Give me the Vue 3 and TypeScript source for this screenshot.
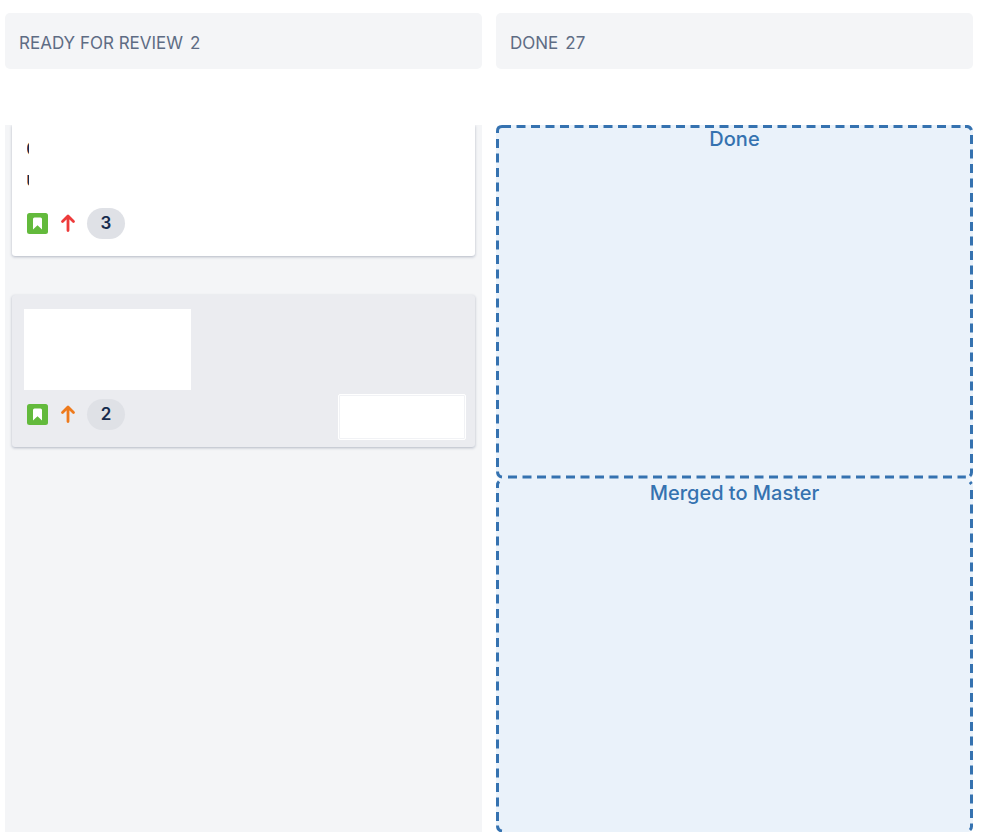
<script setup lang="ts">
interface Zone {
  label: string
  closed: boolean
}

const headers = [
  { name: 'Ready for review', count: 2 },
  { name: 'Done', count: 27 },
]

const zones: Zone[] = [
  { label: 'Done', closed: true },
  { label: 'Merged to Master', closed: false },
]
</script>

<template>
  <main class="board">
    <header class="headers">
      <h2 v-for="h in headers" :key="h.name" class="column-header">
        <span>{{ h.name }}</span>
        <span>{{ h.count }}</span>
      </h2>
    </header>

    <div class="columns">
      <section class="column" aria-label="Ready for review">
        <article class="card first">
          <div class="summary">
            <span class="line">C</span>
            <span class="line">u</span>
          </div>
          <div class="meta">
            <svg class="story" viewBox="0 0 21 21" aria-hidden="true">
              <rect width="21" height="21" rx="2.5" fill="#63ba3c" />
              <path d="M6 6a1.500 1.500 0 0 1 1.500-1.500h6A1.500 1.500 0 0 1 15 6v10.500l-4.500-4.200L6 16.500z" fill="#fff" />
            </svg>
            <svg class="priority high" viewBox="0 0 14 18" aria-hidden="true">
              <path d="M7 15.600V1.400M1.500 6.600 7 1.100l5.500 5.500" />
            </svg>
            <span class="estimate">3</span>
          </div>
        </article>

        <article class="card second">
          <div class="blank-summary"></div>
          <div class="footer">
            <div class="meta">
              <svg class="story" viewBox="0 0 21 21" aria-hidden="true">
                <rect width="21" height="21" rx="2.5" fill="#63ba3c" />
                <path d="M6 6a1.500 1.500 0 0 1 1.500-1.500h6A1.500 1.500 0 0 1 15 6v10.500l-4.500-4.200L6 16.500z" fill="#fff" />
              </svg>
              <svg class="priority medium" viewBox="0 0 14 18" aria-hidden="true">
                <path d="M7 15.600V1.400M1.500 6.600 7 1.100l5.500 5.500" />
              </svg>
              <span class="estimate">2</span>
            </div>
            <div class="blank-key"></div>
          </div>
        </article>
      </section>

      <section class="drop-column" aria-label="Done">
        <div v-for="z in zones" :key="z.label" class="zone">
          <svg class="outline" aria-hidden="true">
            <template v-if="z.closed">
              <line class="dash" x1="6" y1="1.5" x2="99%" y2="1.5" />
              <path class="corner" d="M1.500 8V6Q1.500 1.500 6 1.500" />
              <svg x="100%" overflow="visible">
                <path class="corner" d="M-8 1.500H-6Q-3 1.500-1.500 5" />
              </svg>
            </template>
            <path v-else class="corner" d="M1.500 9V6Q1.500 4 3 2.500" />
            <line class="dash" x1="1.5" y1="14" x2="1.5" y2="98%" />
            <svg x="100%" overflow="visible">
              <line class="dash" x1="-1.5" :y1="z.closed ? 10 : 11" x2="-1.5" y2="98%" />
              <path v-if="!z.closed" class="corner" d="M-3 3-1.500 5" />
            </svg>
            <svg y="100%" overflow="visible">
              <line v-if="z.closed" class="dash" x1="12" y1="-1.5" x2="98.5%" y2="-1.5" />
              <path class="corner" d="M1.500-7Q1.500-2 6-1.500" />
              <svg x="100%" overflow="visible">
                <path class="corner" d="M-1.500-8V-6Q-1.500-4-3-2.500" />
              </svg>
            </svg>
          </svg>
          <h3 class="zone-label">{{ z.label }}</h3>
        </div>
      </section>
    </div>
  </main>
</template>

<style>
body {
  margin: 0;
  background: #fff;
}
</style>

<style scoped>
.board {
  box-sizing: border-box;
  display: flex;
  flex-direction: column;
  min-height: calc(100vh - 3px);
  padding: 13px 26px 0 5px;
  font-family: Inter, "Liberation Sans", sans-serif;
  color: #172b4d;
}

.headers,
.columns {
  display: grid;
  grid-template-columns: 1fr 1fr;
  gap: 14px;
}

.headers {
  margin-bottom: 56px;
}

.columns {
  flex: 1;
}

.column-header {
  box-sizing: border-box;
  display: flex;
  align-items: center;
  gap: 7px;
  height: 56px;
  margin: 0;
  padding: 4px 14px 0;
  border-radius: 5px;
  background: #f4f5f7;
  color: #5e6c84;
  font-size: 17px;
  font-weight: 400;
  line-height: 24px;
  text-transform: uppercase;
}

.column {
  box-sizing: border-box;
  padding: 0 7px;
  background: #f4f5f7;
}

.card {
  border-radius: 3px;
  box-shadow: 0 1px 3px rgba(9, 30, 66, 0.28);
}

.first {
  margin-bottom: 39px;
  padding: 9px 15px 17px;
  border-radius: 0 0 3px 3px;
  background: #fff;
  clip-path: inset(0 -4px -4px -4px);
}

.second {
  padding: 14px 9px 7px 12px;
  background: #ebecf0;
}

.summary {
  width: 2px;
  margin-bottom: 14px;
  overflow: hidden;
}

.line {
  display: block;
  font-size: 20px;
  font-weight: 500;
  line-height: 30px;
  text-indent: -1px;
}

.meta {
  display: flex;
  align-items: center;
}

.story {
  width: 21px;
  height: 21px;
  margin-right: 13px;
}

.priority {
  width: 14px;
  height: 18px;
  margin-right: 12px;
  overflow: visible;
  fill: none;
  stroke-width: 2.8;
  stroke-linecap: round;
  stroke-linejoin: round;
}

.high {
  stroke: #ed3b3b;
}

.medium {
  stroke: #ee7a1c;
}

.estimate {
  width: 38px;
  border-radius: 16px;
  background: #dfe1e6;
  font-size: 17px;
  font-weight: 600;
  line-height: 31px;
  text-align: center;
}

.blank-summary {
  width: 167px;
  height: 81px;
  background: #fff;
}

.footer {
  display: flex;
  align-items: flex-start;
  justify-content: space-between;
  margin-top: 4px;
}

.footer .meta {
  padding: 5px 0 0 3px;
}

.blank-key {
  box-sizing: border-box;
  width: 128px;
  height: 46px;
  border: 1px solid #fff;
  border-radius: 2px;
  background: #fff;
  box-shadow: inset 0 0 0 1px #f1f2f5;
}

.drop-column {
  display: grid;
  grid-template-rows: 1fr 1fr;
}

.zone {
  position: relative;
  border-radius: 5px;
  background: #eaf2fa;
}

.outline {
  position: absolute;
  inset: 0;
  width: 100%;
  height: 100%;
}

.dash,
.corner {
  fill: none;
  stroke: #3572b0;
  stroke-width: 3;
}

.dash {
  stroke-dasharray: 9 5.5;
}

.zone-label {
  margin: 0;
  padding-top: 2px;
  color: #3572b0;
  font-size: 20px;
  font-weight: 500;
  line-height: 24px;
  text-align: center;
}
</style>
